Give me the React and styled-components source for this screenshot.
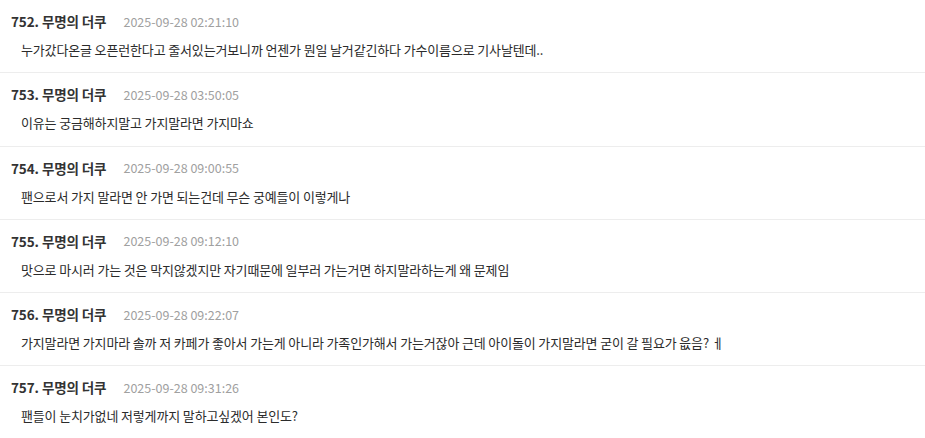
import React from 'react';
import styled, { createGlobalStyle } from 'styled-components';

const comments = [
	{ no: 752, name: '무명의 더쿠', date: '2025-09-28 02:21:10', text: '누가갔다온글 오픈런한다고 줄서있는거보니까 언젠가 뭔일 날거같긴하다 가수이름으로 기사날텐데..' },
	{ no: 753, name: '무명의 더쿠', date: '2025-09-28 03:50:05', text: '이유는 궁금해하지말고 가지말라면 가지마쇼' },
	{ no: 754, name: '무명의 더쿠', date: '2025-09-28 09:00:55', text: '팬으로서 가지 말라면 안 가면 되는건데 무슨 궁예들이 이렇게나' },
	{ no: 755, name: '무명의 더쿠', date: '2025-09-28 09:12:10', text: '맛으로 마시러 가는 것은 막지않겠지만 자기때문에 일부러 가는거면 하지말라하는게 왜 문제임' },
	{ no: 756, name: '무명의 더쿠', date: '2025-09-28 09:22:07', text: '가지말라면 가지마라 솔까 저 카페가 좋아서 가는게 아니라 가족인가해서 가는거잖아 근데 아이돌이 가지말라면 굳이 갈 필요가 읎음? ㅔ' },
	{ no: 757, name: '무명의 더쿠', date: '2025-09-28 09:31:26', text: '팬들이 눈치가없네 저렇게까지 말하고싶겠어 본인도?' },
];

const Global = createGlobalStyle`
	html, body {
		margin: 0;
		padding: 0;
		background: #fff;
	}
	body {
		font-family: 'Noto Sans CJK KR', 'Noto Sans', sans-serif;
		overflow: hidden;
	}
`;

const List = styled.ul`
	list-style: none;
	margin: 0;
	padding: 0;
`;

const Item = styled.li`
	padding: 12px 0 12.25px;
	border-bottom: 1px solid #ededed;
`;

const Meta = styled.div`
	display: flex;
	align-items: center;
	height: 18px;
	padding-left: 11px;
	gap: 17px;
`;

const Name = styled.span`
	font-size: 13.5px;
	font-weight: 700;
	color: #333;
	letter-spacing: -0.1px;
`;

const Time = styled.span`
	font-size: 12.5px;
	color: #a0a0a0;
`;

const Body = styled.p`
	margin: 10px 0 0;
	padding-left: 21px;
	font-size: 13px;
	line-height: 20px;
	color: #2b2b2b;
	letter-spacing: -0.15px;
	white-space: nowrap;
`;

const App = () => (
	<>
		<Global />
		<List>
			{comments.map((c) => (
				<Item key={c.no}>
					<Meta>
						<Name>
							{c.no}. {c.name}
						</Name>
						<Time>{c.date}</Time>
					</Meta>
					<Body>{c.text}</Body>
				</Item>
			))}
		</List>
	</>
);

export default App;
